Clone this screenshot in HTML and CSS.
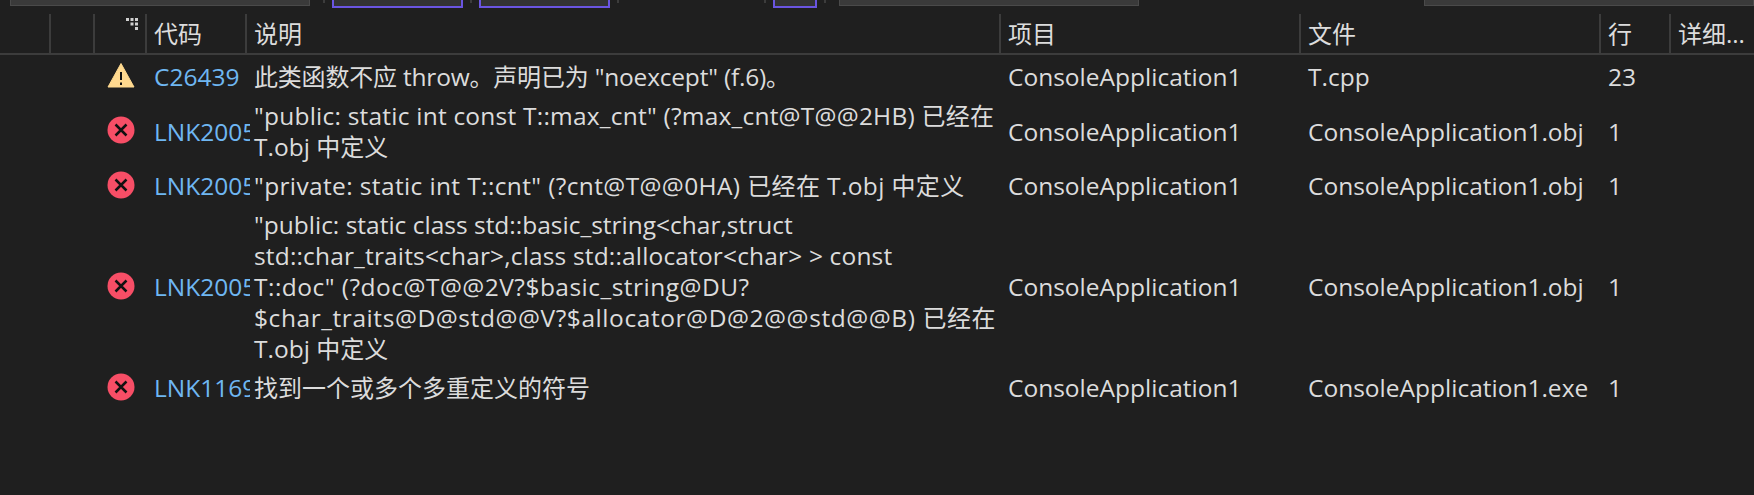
FILE: index.html
```html
<!DOCTYPE html>
<html lang="zh-CN">
<head>
    <meta charset="UTF-8">
    <title>错误列表</title>
    <link rel="stylesheet" href="styles.css">
</head>
<body>
    <div class="topstrip">
        <span class="bar bar-a"></span>
        <span class="tick"></span>
        <span class="outline outline-a"></span>
        <span class="tick"></span>
        <span class="outline outline-a"></span>
        <span class="tick"></span>
        <span class="tick tick-far"></span>
        <span class="outline outline-b"></span>
        <span class="tick"></span>
        <span class="bar bar-b"></span>
        <span class="bar bar-c"></span>
    </div>

    <div class="header">
        <div class="hcell"></div>
        <div class="hcell"></div>
        <div class="hcell hcell-sort">
            <svg class="sort-dots" width="12" height="12" viewBox="0 0 12 12">
                <path fill="#d0d0d0" d="M0 0h3v3H0zM4.500 0h3v3h-3zM9 0h3v3H9zM4.500 4.500h3v3h-3zM9 4.500h3v3H9zM9 9h3v3H9z"/>
            </svg>
        </div>
        <div class="hcell">代码</div>
        <div class="hcell">说明</div>
        <div class="hcell">项目</div>
        <div class="hcell">文件</div>
        <div class="hcell">行</div>
        <div class="hcell">详细...</div>
    </div>

    <div class="rows">
        <div class="row">
            <div class="icon">
                <svg width="28" height="28" viewBox="0 0 28 28">
                    <path fill="#ffd98f" stroke="#ffd98f" stroke-linejoin="round" d="M14 1.500 L27 25 H1 Z"/>
                    <path fill="#111" d="M13 10h2v8h-2zM13 20.500h2v2.500h-2z"/>
                </svg>
            </div>
            <div class="code">C26439</div>
            <div class="desc fit-a"><span class="zh">此类函数不应</span> throw<span class="zh">。声明已为</span> "noexcept" (f.6)<span class="zh">。</span></div>
            <div class="cell">ConsoleApplication1</div>
            <div class="cell">T.cpp</div>
            <div class="cell">23</div>
        </div>

        <div class="row">
            <div class="icon">
                <svg width="28" height="28" viewBox="0 0 28 28">
                    <circle cx="14" cy="14" r="13.500" fill="#f74e66"/>
                    <path stroke="#111" stroke-width="2.500" d="M8.500 8.500 L19.500 19.500 M19.500 8.500 L8.500 19.500"/>
                </svg>
            </div>
            <div class="code">LNK2005</div>
            <div class="desc"><span class="fit-c">"public: static int const T::max_cnt" (?max_cnt@T@@2HB) <span class="zh">已经在</span></span><br>T.obj <span class="zh">中定义</span></div>
            <div class="cell">ConsoleApplication1</div>
            <div class="cell">ConsoleApplication1.obj</div>
            <div class="cell">1</div>
        </div>

        <div class="row">
            <div class="icon">
                <svg width="28" height="28" viewBox="0 0 28 28">
                    <circle cx="14" cy="14" r="13.500" fill="#f74e66"/>
                    <path stroke="#111" stroke-width="2.500" d="M8.500 8.500 L19.500 19.500 M19.500 8.500 L8.500 19.500"/>
                </svg>
            </div>
            <div class="code">LNK2005</div>
            <div class="desc fit-d">"private: static int T::cnt" (?cnt@T@@0HA) <span class="zh">已经在</span> T.obj <span class="zh">中定义</span></div>
            <div class="cell">ConsoleApplication1</div>
            <div class="cell">ConsoleApplication1.obj</div>
            <div class="cell">1</div>
        </div>

        <div class="row">
            <div class="icon">
                <svg width="28" height="28" viewBox="0 0 28 28">
                    <circle cx="14" cy="14" r="13.500" fill="#f74e66"/>
                    <path stroke="#111" stroke-width="2.500" d="M8.500 8.500 L19.500 19.500 M19.500 8.500 L8.500 19.500"/>
                </svg>
            </div>
            <div class="code">LNK2005</div>
            <div class="desc">"public: static class std::basic_string&lt;char,struct<br><span class="fit-b">std::char_traits&lt;char&gt;,class std::allocator&lt;char&gt; &gt; const</span><br><span class="fit-e">T::doc" (?doc@T@@2V?$basic_string@DU?</span><br><span class="fit-f">$char_traits@D@std@@V?$allocator@D@2@@std@@B) <span class="zh">已经在</span></span><br>T.obj <span class="zh">中定义</span></div>
            <div class="cell">ConsoleApplication1</div>
            <div class="cell">ConsoleApplication1.obj</div>
            <div class="cell">1</div>
        </div>

        <div class="row">
            <div class="icon">
                <svg width="28" height="28" viewBox="0 0 28 28">
                    <circle cx="14" cy="14" r="13.500" fill="#f74e66"/>
                    <path stroke="#111" stroke-width="2.500" d="M8.500 8.500 L19.500 19.500 M19.500 8.500 L8.500 19.500"/>
                </svg>
            </div>
            <div class="code">LNK1169</div>
            <div class="desc"><span class="zh">找到一个或多个多重定义的符号</span></div>
            <div class="cell">ConsoleApplication1</div>
            <div class="cell">ConsoleApplication1.exe</div>
            <div class="cell">1</div>
        </div>
    </div>
</body>
</html>
```

FILE: styles.css
```css
html, body { margin: 0; height: 100%; background: #1f1f1f; overflow: hidden; }
body { font-family: "Open Sans", "Noto Sans CJK SC", sans-serif; font-size: 24.5px; color: #dcdcdc; }
.zh { font-size: 24px; }

.topstrip { display: flex; height: 14px; align-items: flex-start; }
.bar { display: block; height: 6px; box-sizing: border-box; background: #3a3a3a; border: 1px solid #4a4a4a; border-top: none; }
.bar-a { width: 300px; margin: 0 6px 0 10px; }
.bar-b { width: 300px; margin-left: 6px; }
.bar-c { flex: 1; margin-left: 285px; }
.tick { width: 2px; height: 3px; background: #3c3c3c; margin: 0 7px; }
.tick-far { margin-left: 138px; }
.outline { display: block; height: 8px; box-sizing: border-box; background: #333; border: 2px solid #6a55e0; border-top: none; }
.outline-a { width: 131px; }
.outline-b { width: 44px; }

.header { display: grid; grid-template-columns: 49px 44px 52px 100px 754px 300px 300px 70px 1fr; height: 39px; border-bottom: 2px solid #3c3c3c; font-size: 24px; }
.hcell { padding-left: 7px; border-left: 2px solid #3c3c3c; line-height: 40px; white-space: nowrap; overflow: hidden; }
.hcell:first-child { border-left: none; }
.hcell-sort { position: relative; }
.sort-dots { position: absolute; right: 7px; top: 4px; }

.rows { padding-top: 2px; }
.row { display: grid; grid-template-columns: 146px 104px 750px 300px 300px 70px 1fr; align-items: center; padding: 4px 0; line-height: 31px; }
.icon { display: flex; justify-content: flex-end; padding-right: 11px; margin-bottom: 2px; }
.icon svg { display: block; }
.code { padding-left: 8px; color: #6fb7f2; overflow: hidden; white-space: nowrap; }
.desc { padding-left: 4px; }
.cell { padding-left: 8px; white-space: nowrap; }

/* line widths differ a bit from the original font */
.fit-a { letter-spacing: -0.2px; }
.fit-b { letter-spacing: 0.16px; }
.fit-c { letter-spacing: 0.22px; }
.fit-d { letter-spacing: 0.37px; }
.fit-e { letter-spacing: 0.48px; }
.fit-f { letter-spacing: 0.57px; }
```
